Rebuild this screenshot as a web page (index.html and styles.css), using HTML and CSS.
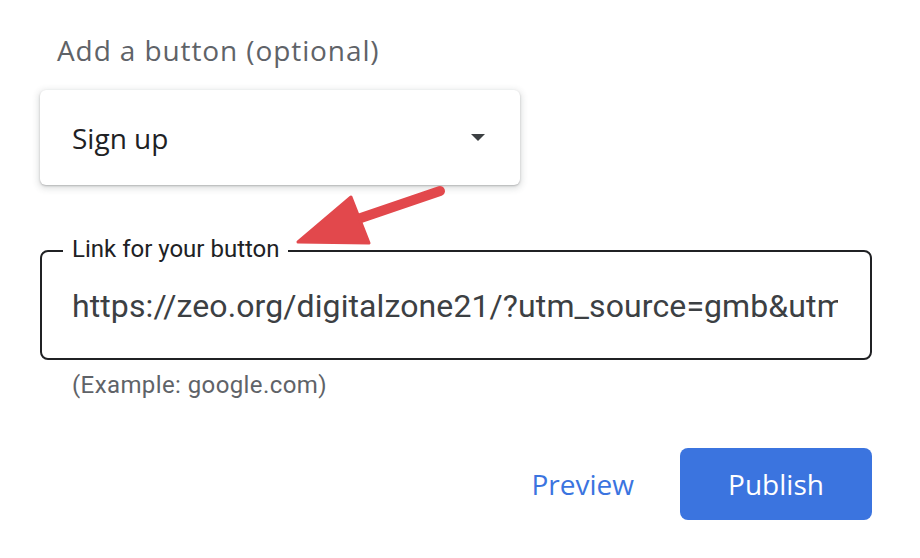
FILE: index.html
```html
<!doctype html>
<html>

<head>
  <title>Add a button</title>
  <meta charset="utf-8">
  <link rel="stylesheet" href="styles.css">
</head>

<body>
  <div class="panel">
    <h2 class="title">Add a button (optional)</h2>

    <div class="select">
      <span class="select-value">Sign up</span>
      <span class="caret"></span>
    </div>

    <fieldset class="field">
      <legend class="field-label">Link for your button</legend>
      <div class="field-value">https://zeo.org/digitalzone21/?utm_source=gmb&amp;utm</div>
    </fieldset>
    <p class="hint">(Example: google.com)</p>

    <div class="actions">
      <button class="btn-text">Preview</button>
      <button class="btn-primary">Publish</button>
    </div>

    <!-- annotation arrow drawn over the form -->
    <svg class="arrow" width="920" height="558" viewBox="0 0 920 558">
      <line x1="440" y1="191" x2="352" y2="221" stroke="#e2484c" stroke-width="10" stroke-linecap="round" />
      <polygon points="298,242 351,197 369,243" fill="#e2484c" stroke="#e2484c" stroke-width="3" stroke-linejoin="round" />
    </svg>
  </div>
</body>

</html>
```

FILE: styles.css
```css
body {
  margin: 0;
  background-color: #fff;
  font-family: "Open Sans", "Liberation Sans", sans-serif;
}

.panel {
  position: relative;
  width: 832px;
  height: 558px;
  padding: 0 48px 0 40px;
  overflow: hidden;
}

.title {
  margin: 32px 0 0 0;
  padding-left: 17px;
  font-size: 28px;
  line-height: 36px;
  font-weight: 400;
  letter-spacing: 0.9px;
  color: #5f6368;
}

.select {
  display: flex;
  align-items: center;
  justify-content: space-between;
  width: 480px;
  height: 95px;
  box-sizing: border-box;
  margin-top: 22px;
  padding: 0 35px 0 32px;
  border-radius: 6px;
  background-color: #fff;
  box-shadow: 0 1px 2px rgba(60, 64, 67, 0.3), 0 2px 6px 2px rgba(60, 64, 67, 0.15);
}

.select-value {
  font-size: 28px;
  color: #202124;
}

.caret {
  width: 0;
  height: 0;
  border-left: 7px solid transparent;
  border-right: 7px solid transparent;
  border-top: 7px solid #3c4043;
}

.field {
  min-width: 0;
  margin: 52px 0 0 0;
  padding: 22px 32px 33px 21px;
  border: 2px solid #202124;
  border-radius: 8px;
  font-family: Roboto, "Liberation Sans", sans-serif;
}

.field-label {
  padding: 0 8px 4px 9px;
  font-size: 24px;
  line-height: 24px;
  color: #202124;
}

.field-value {
  margin-left: 9px;
  font-size: 32px;
  line-height: 38px;
  letter-spacing: 0.1px;
  color: #3c4043;
  white-space: nowrap;
  overflow: hidden;
}

.hint {
  margin: 11px 0 0 0;
  padding-left: 32px;
  font-family: Roboto, "Liberation Sans", sans-serif;
  font-size: 24px;
  line-height: 28px;
  letter-spacing: 0.4px;
  color: #5f6368;
}

.actions {
  display: flex;
  justify-content: flex-end;
  align-items: center;
  gap: 46px;
  margin-top: 49px;
}

.btn-text,
.btn-primary {
  font-family: "Open Sans", "Liberation Sans", sans-serif;
  font-size: 28px;
  font-weight: 500;
  border: none;
  cursor: pointer;
}

.btn-text {
  padding: 0;
  background: none;
  color: #3b74df;
}

.btn-primary {
  width: 192px;
  height: 72px;
  border-radius: 8px;
  background-color: #3b74df;
  color: #fff;
}

.arrow {
  position: absolute;
  top: 0;
  left: 0;
  pointer-events: none;
}
```
